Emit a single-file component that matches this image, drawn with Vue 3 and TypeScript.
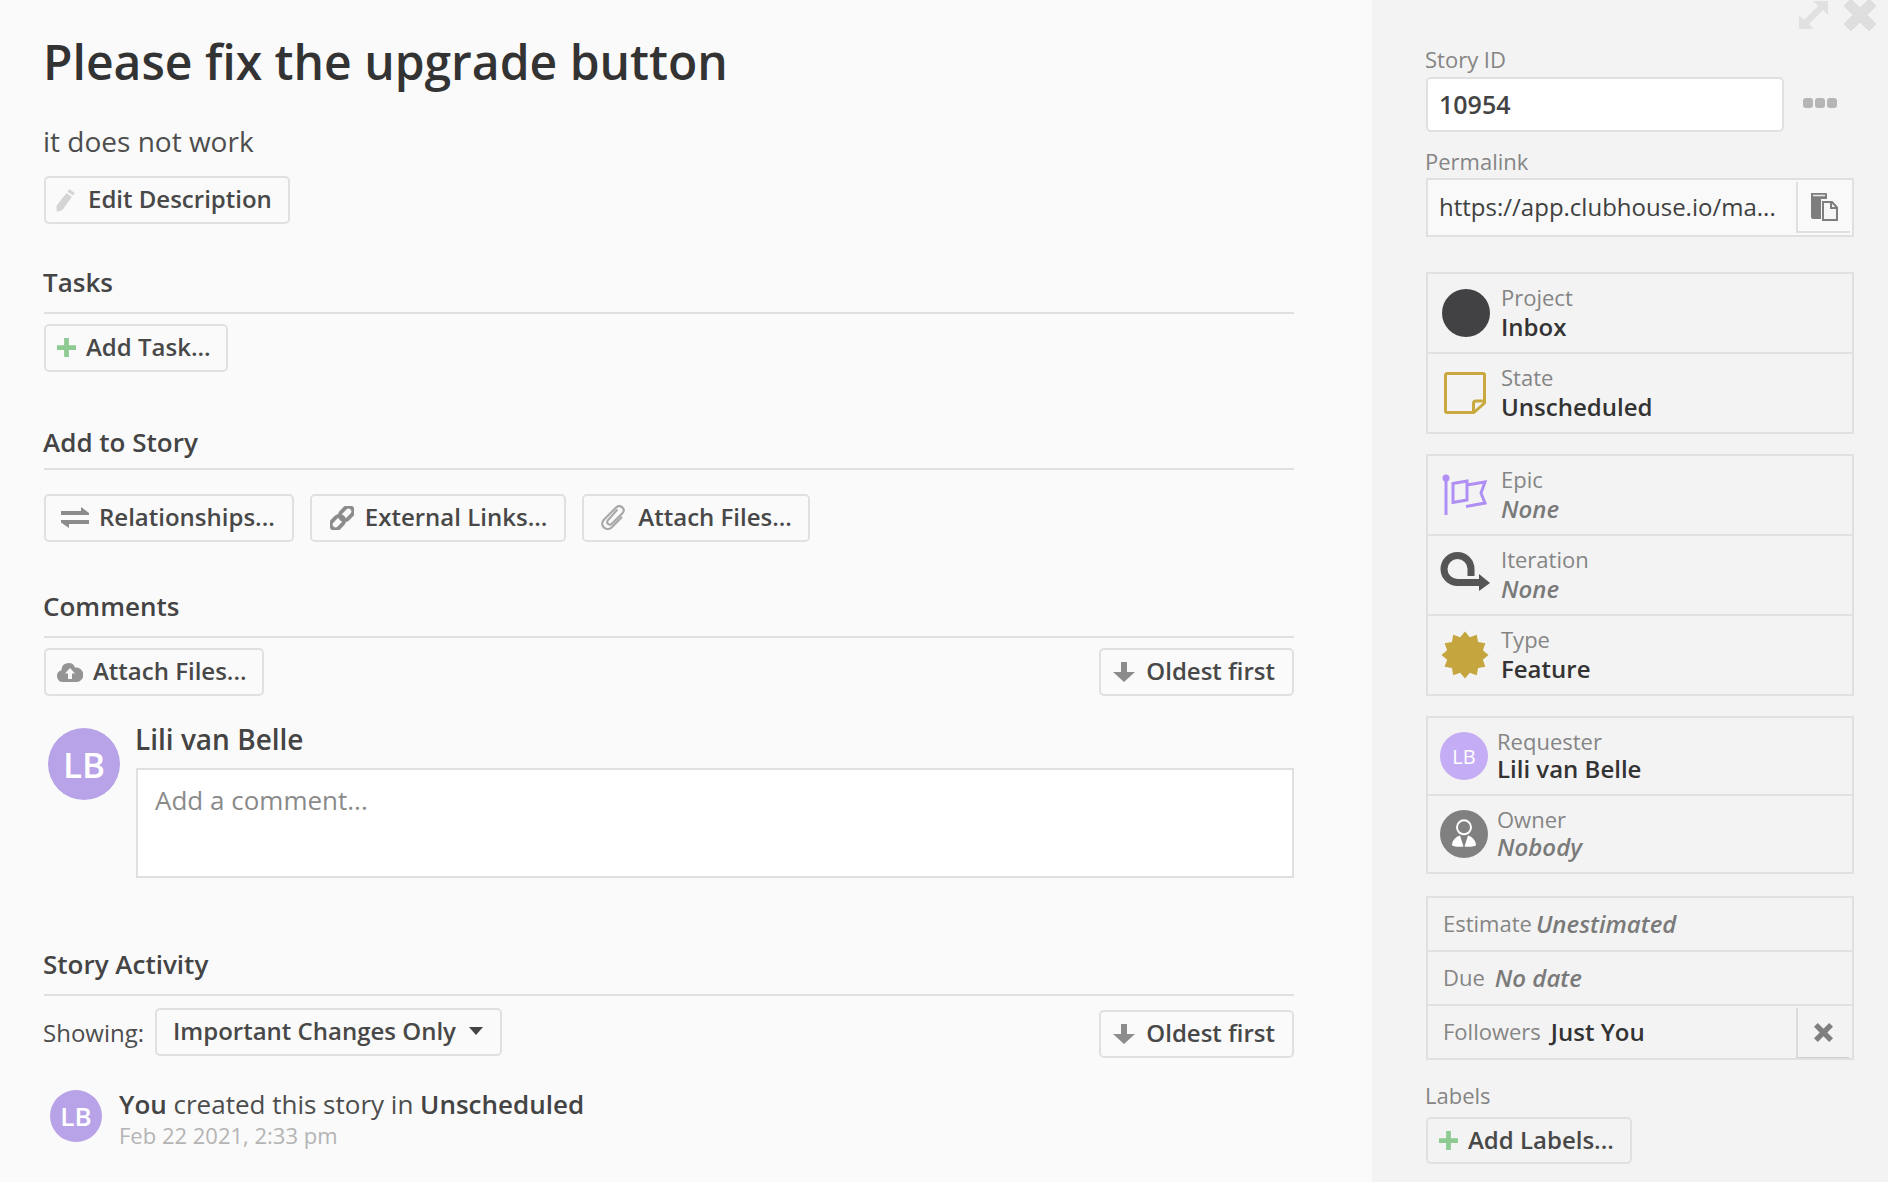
<script setup lang="ts">
const burst: string = Array.from({ length: 24 }, (_, i) => {
  const r = i % 2 === 0 ? 23.5 : 18.5
  const a = (i * Math.PI) / 12 - Math.PI / 2
  return `${(24 + r * Math.cos(a)).toFixed(2)},${(24 + r * Math.sin(a)).toFixed(2)}`
}).join(' ')
</script>

<template>
  <div class="page">
    <main class="main">
      <h1 class="title">Please fix the upgrade button</h1>
      <p class="desc">it does not work</p>
      <button class="btn edit">
        <svg class="ic-pencil" viewBox="2 0 18 22"><path d="M14 1l5 3.500-1.600 2.400-5-3.500zM11.400 4.600l5 3.500-8.800 12.200-5 1.400-.4-5.300z" fill="#d4d4d4"/></svg>
        Edit Description
      </button>

      <section class="tasks">
        <h2 class="heading">Tasks</h2>
        <button class="btn add-task">
          <svg class="ic-plus" viewBox="0 0 20 20"><path d="M7.500 0h5v7.500H20v5h-7.500V20h-5v-7.500H0v-5h7.500z" fill="#8ecb93"/></svg>
          Add Task...
        </button>
      </section>

      <section class="add-story">
        <h2 class="heading story-heading">Add to Story</h2>
        <div class="btn-row">
          <button class="btn rel-btn">
            <svg class="ic-rel" viewBox="0 0 28 21"><path d="M0 4h20V0l8 6v2H0zM28 13H0v2.500L8 21v-4h20z" fill="#8c8c8c"/></svg>
            Relationships...
          </button>
          <button class="btn ext-btn">
            <svg class="ic-link" viewBox="0 0 24 24" fill="none" stroke="#8c8c8c" stroke-width="3.800"><rect x="11.750" y="0" width="9.500" height="15" rx="4.750" transform="rotate(45 16.500 7.500)"/><rect x="2.750" y="9" width="9.500" height="15" rx="4.750" transform="rotate(45 7.500 16.500)"/></svg>
            External Links...
          </button>
          <button class="btn">
            <svg class="ic-clip" viewBox="1 1 22 22" fill="none" stroke="#a8a8a8" stroke-width="1.900" stroke-linecap="round"><path d="M15 5.500L7 14.500c-2 2.500 1.500 5 3.500 3L20 8c3-3.500-2-8-5.500-5L3.500 14c-4.500 5 2.500 11 7 6.500L19 12"/></svg>
            Attach Files...
          </button>
        </div>
      </section>

      <section class="comments">
        <h2 class="heading">Comments</h2>
        <div class="bar">
          <button class="btn cloud-btn">
            <svg class="ic-cloud" viewBox="0 0 26 20"><path d="M6 20a6 6 0 0 1-1.500-11.800A7 7 0 0 1 18 5.500 7.300 7.300 0 0 1 20 20z" fill="#949494"/><path d="M13 6l5 5.500h-3V17h-4v-5.500H8z" fill="#fafafa"/></svg>
            Attach Files...
          </button>
          <button class="btn oldest">
            <svg class="ic-down" viewBox="0 0 22 20"><path d="M8 0h6v10h8L11 20 0 10h8z" fill="#8c8c8c"/></svg>
            Oldest first
          </button>
        </div>
        <div class="composer">
          <div class="avatar big">LB</div>
          <div class="compose-body">
            <div class="author">Lili van Belle</div>
            <div class="textarea">Add a comment...</div>
          </div>
        </div>
      </section>

      <section class="activity">
        <h2 class="heading">Story Activity</h2>
        <div class="bar show-bar">
          <div class="showing">
            <span class="show-label">Showing:</span>
            <button class="btn select">
              Important Changes Only
              <span class="caret"></span>
            </button>
          </div>
          <button class="btn oldest oldest-low">
            <svg class="ic-down" viewBox="0 0 22 20"><path d="M8 0h6v10h8L11 20 0 10h8z" fill="#8c8c8c"/></svg>
            Oldest first
          </button>
        </div>
        <div class="entry">
          <div class="avatar mid">LB</div>
          <div class="entry-text">
            <div class="entry-line"><b>You</b> created this story in <b>Unscheduled</b></div>
            <div class="entry-date">Feb 22 2021, 2:33 pm</div>
          </div>
        </div>
      </section>
    </main>

    <aside class="side">
      <svg class="ic-expand" viewBox="0 0 32 30"><path d="M1 29V15l5 5L20 6l-5-5h15v14l-5-5L11 24l5 5z" fill="#e1e1e1"/></svg>
      <svg class="ic-close" viewBox="0 0 32 32"><path d="M7 -1L16 8l9-9 7 7-9 9 9 9-7 7-9-9-9 9-7-7 9-9-9-9z" fill="#dedede" stroke="#dedede" stroke-linejoin="round" stroke-width="1"/></svg>

      <div class="label">Story ID</div>
      <div class="id-row">
        <div class="id-input">10954</div>
        <div class="dots"><i></i><i></i><i></i></div>
      </div>

      <div class="label perma-label">Permalink</div>
      <div class="perma">
        <div class="perma-url">https://app.clubhouse.io/ma...</div>
        <div class="perma-copy">
          <svg class="ic-copy" viewBox="0 0 28 28"><path d="M1 0h15a1 1 0 0 1 1 1v5h-6v20H3a2 2 0 0 1-2-2z" fill="#7e7e7e"/><path d="M13 9h9l5 5.500V27H13z" fill="#f6f6f6" stroke="#7e7e7e" stroke-width="2"/><path d="M21 9v6h6" fill="none" stroke="#7e7e7e" stroke-width="2"/><path d="M3 2.500h12" stroke="#e8e8e8" stroke-width="1.500"/></svg>
        </div>
      </div>

      <div class="group first">
        <div class="row">
          <span class="ico"><span class="dot"></span></span>
          <div class="meta"><div class="k">Project</div><div class="v">Inbox</div></div>
        </div>
        <div class="row">
          <span class="ico">
            <svg class="ic-note" viewBox="0 0 42 42" fill="none" stroke="#c9a93f" stroke-width="3"><path d="M3 1.500h36a1.500 1.500 0 0 1 1.500 1.500v28L30 40.500H3A1.500 1.500 0 0 1 1.500 39V3A1.500 1.500 0 0 1 3 1.500z" stroke-linejoin="round"/><path d="M40 29H32a2.500 2.500 0 0 0-2.500 2.500V40"/></svg>
          </span>
          <div class="meta"><div class="k">State</div><div class="v">Unscheduled</div></div>
        </div>
      </div>

      <div class="group">
        <div class="row">
          <span class="ico">
            <svg class="ic-flag" viewBox="0 0 50 50" fill="none" stroke="#b08ff5" stroke-width="3"><path d="M7 8v37"/><circle cx="7" cy="8" r="3.500" fill="#b08ff5" stroke="none"/><path d="M14 13.500l14-2.500v19l-14 2.500zM28 15l18-3-4 11 4 10-19 3.500"/></svg>
          </span>
          <div class="meta"><div class="k">Epic</div><div class="v none">None</div></div>
        </div>
        <div class="row">
          <span class="ico">
            <svg class="ic-iter" viewBox="0 0 50 42"><path d="M31 26V19A13.500 13.500 0 1 0 17.500 32.500H40" fill="none" stroke="#555" stroke-width="7"/><path d="M39 24l11 9-11 8z" fill="#555"/></svg>
          </span>
          <div class="meta"><div class="k">Iteration</div><div class="v none">None</div></div>
        </div>
        <div class="row">
          <span class="ico">
            <svg class="ic-burst" viewBox="0 0 48 48"><polygon :points="burst" fill="#c4a53e"/></svg>
          </span>
          <div class="meta"><div class="k">Type</div><div class="v">Feature</div></div>
        </div>
      </div>

      <div class="group people">
        <div class="row person">
          <span class="person-ico"><span class="avatar small">LB</span></span>
          <div class="meta"><div class="k">Requester</div><div class="v">Lili van Belle</div></div>
        </div>
        <div class="row person">
          <span class="person-ico">
            <svg class="ic-owner" viewBox="0 0 48 48"><circle cx="24" cy="24" r="24" fill="#808080"/><circle cx="24" cy="17.300" r="7" fill="none" stroke="#fff" stroke-width="2"/><path d="M20 25.500C15 27 12 31 12 35.500c3 1.500 8 1.500 11.500 1zM28 25.500C33 27 36 31 36 35.500c-3 1.500-8 1.500-11.500 1z" fill="#fff"/></svg>
          </span>
          <div class="meta"><div class="k">Owner</div><div class="v none">Nobody</div></div>
        </div>
      </div>

      <div class="group compact">
        <div class="line"><span class="k">Estimate</span><span class="v none est">Unestimated</span></div>
        <div class="line"><span class="k">Due</span><span class="v none due">No date</span></div>
        <div class="line follow">
          <div class="follow-main"><span class="k">Followers</span><span class="v fol">Just You</span></div>
          <div class="follow-x">
            <svg class="ic-x" viewBox="0 0 20 20"><path d="M4 0l6 6 6-6 4 4-6 6 6 6-4 4-6-6-6 6-4-4 6-6-6-6z" fill="#7f7f7f"/></svg>
          </div>
        </div>
      </div>

      <div class="label labels-label">Labels</div>
      <button class="btn add-labels">
        <svg class="ic-plus" viewBox="0 0 20 20"><path d="M7.500 0h5v7.500H20v5h-7.500V20h-5v-7.500H0v-5h7.500z" fill="#8ecb93"/></svg>
        Add Labels...
      </button>
    </aside>
  </div>
</template>

<style>
html, body { margin: 0; padding: 0; background: #fafafa; }
</style>

<style scoped>
.page {
  display: flex;
  width: 1888px;
  height: 1182px;
  overflow: hidden;
  font-family: "Open Sans", "Liberation Sans", sans-serif;
  color: #3a3a3a;
  background: #fafafa;
}
.main { width: 1372px; box-sizing: border-box; padding: 0 78px 0 44px; flex: none; }
.title { margin: 0 0 0 -1px; padding-top: 31px; font-size: 48px; line-height: 62px; font-weight: 600; color: #333; }
.desc { margin: 30px 0 0 -1px; font-size: 28px; line-height: 36px; font-weight: 400; color: #4d4d4d; }
.btn {
  display: inline-flex;
  align-items: center;
  height: 48px;
  box-sizing: border-box;
  padding: 0 16px 3px 12px;
  border: 2px solid #e0e0e0;
  border-radius: 5px;
  background: transparent;
  font-family: inherit;
  font-size: 24px;
  font-weight: 600;
  color: #484848;
  white-space: nowrap;
}
.btn svg { position: relative; top: 1px; }
.edit { margin-top: 17px; padding-right: 16px; }
.heading {
  margin: 0;
  height: 48px;
  line-height: 32px;
  font-size: 26px;
  font-weight: 600;
  color: #444;
  border-bottom: 2px solid #e0e0e0;
  box-sizing: border-box;
  text-indent: -1px;
}
.story-heading { line-height: 40px; }
.tasks { margin-top: 42px; }
.add-task { margin-top: 10px; padding-right: 15px; }
.add-story { margin-top: 50px; }
.btn-row { display: flex; gap: 16px; margin-top: 24px; }
.rel-btn { padding-right: 17px; }
.ext-btn { padding-right: 17px; }
.cloud-btn { padding-right: 15px; }
.oldest { padding-right: 17px; }
.comments { margin-top: 48px; }
.bar { display: flex; justify-content: space-between; align-items: flex-start; margin-top: 10px; }
.composer { display: flex; margin-top: 32px; padding-left: 4px; }
.avatar {
  display: flex; align-items: center; justify-content: center;
  border-radius: 50%;
  background: #b9a3e8;
  color: #fff;
  flex: none;
}
.big { width: 72px; height: 72px; font-size: 35px; font-weight: 600; }
.mid { width: 52px; height: 52px; font-size: 26px; font-weight: 600; }
.small { width: 48px; height: 48px; font-size: 20px; background: #c5adf5; font-weight: 400; }
.compose-body { flex: 1; margin-left: 16px; }
.author { font-size: 28px; line-height: 40px; height: 40px; font-weight: 600; margin: -9px 0 0 -1px; color: #444; }
.textarea {
  margin-top: 9px;
  height: 110px;
  box-sizing: border-box;
  padding: 12px 17px;
  background: #fff;
  border: 2px solid #e0e0e0;
  font-size: 26px;
  line-height: 36px;
  color: #8a8a8a;
}
.activity { margin-top: 70px; }
.show-bar { margin-top: 12px; }
.showing { display: flex; align-items: center; gap: 11px; }
.show-label { font-size: 24px; color: #4d4d4d; margin-left: -1px; }
.select { padding: 0 17px 3px 16px; }
.caret {
  margin-left: 13px;
  border-left: 7px solid transparent;
  border-right: 7px solid transparent;
  border-top: 8px solid #444;
}
.oldest-low { margin-top: 2px; }
.entry { display: flex; padding-left: 6px; margin-top: 32px; }
.entry-text { margin-left: 17px; margin-top: -4px; }
.entry-line { font-size: 26px; line-height: 36px; color: #4d4d4d; }
.entry-line b { font-weight: 600; color: #444; }
.entry-date { font-size: 22px; line-height: 30px; color: #b4b4b4; margin-top: -2px; }

.ic-pencil { width: 20px; height: 24px; margin-right: 12px; margin-left: -2px; }
.ic-plus { width: 19px; height: 19px; margin-right: 10px; margin-left: -1px; }
.ic-rel { width: 28px; height: 21px; margin-right: 10px; margin-left: 3px; }
.ic-link { width: 24px; height: 24px; margin-right: 11px; margin-left: 6px; }
.ic-clip { width: 25px; height: 25px; margin-right: 12px; margin-left: 5px; }
.ic-cloud { width: 26px; height: 20px; margin-right: 10px; margin-left: -1px; }
.ic-down { width: 22px; height: 20px; margin-right: 11px; }

.side {
  position: relative;
  flex: 1;
  box-sizing: border-box;
  background: #f3f3f3;
  padding: 44px 34px 0 54px;
}
.ic-expand { position: absolute; left: 426px; top: 0; width: 32px; height: 30px; }
.ic-close { position: absolute; left: 472px; top: 0; width: 32px; height: 32px; }
.label { font-size: 22px; line-height: 30px; color: #858585; margin-left: -1px; }
.id-row { display: flex; align-items: center; margin-top: 3px; }
.id-input {
  width: 358px; height: 55px; box-sizing: border-box;
  background: #fff;
  border: 2px solid #e0e0e0;
  border-radius: 5px;
  padding-left: 11px;
  line-height: 51px;
  font-size: 25px;
  font-weight: 600;
  color: #444;
}
.dots { display: flex; gap: 2px; margin: 0 0 3px 19px; }
.dots i { width: 10px; height: 10px; border-radius: 3px; background: #b5b5b5; }
.perma-label { margin-top: 14px; }
.perma {
  display: flex; align-items: stretch;
  margin-top: 2px;
  height: 59px; box-sizing: border-box;
  border: 2px solid #e0e0e0;
  background: #f9f9f9;
}
.perma-url { flex: 1; padding-left: 11px; line-height: 53px; font-size: 24px; color: #3f3f3f; white-space: nowrap; overflow: hidden; }
.perma-copy {
  width: 54px; box-sizing: border-box; margin: 2px 2px 2px 0;
  border-left: 2px solid #e0e0e0; border-bottom: 2px solid #e0e0e0;
  display: flex; align-items: center; justify-content: center;
}
.ic-copy { width: 28px; height: 28px; }
.group { border: 2px solid #e0e0e0; margin-top: 20px; }
.group.first { margin-top: 35px; }
.row { display: flex; height: 78px; align-items: center; box-sizing: content-box; }
.row + .row { border-top: 2px solid #e0e0e0; }
.ico { width: 73px; display: flex; justify-content: center; flex: none; box-sizing: border-box; }
.dot { width: 48px; height: 48px; border-radius: 50%; background: #424244; margin-left: 2px; }
.meta { display: flex; flex-direction: column; padding-bottom: 3px; }
.k { font-size: 22px; line-height: 30px; color: #858585; }
.v { font-size: 24px; line-height: 29px; font-weight: 600; color: #333; }
.v.none { font-style: italic; font-weight: 600; color: #7a7a7a; font-size: 24px; }
.ic-note { width: 42px; height: 42px; }
.ic-flag { width: 50px; height: 50px; margin-right: 2px; }
.ic-iter { width: 50px; height: 42px; margin-bottom: 9px; }
.ic-burst { width: 48px; height: 48px; }
.people .row { height: 76px; }
.person-ico { width: 69px; padding-left: 12px; box-sizing: border-box; flex: none; display: flex; }
.ic-owner { width: 48px; height: 48px; display: block; }
.people .k { line-height: 28px; }
.people .v { line-height: 27px; }
.compact { margin-top: 22px; }
.line { height: 50px; padding-bottom: 2px; display: flex; align-items: center; padding-left: 15px; box-sizing: content-box; }
.line + .line { border-top: 2px solid #e0e0e0; }
.line .k { line-height: 50px; }
.est { margin-left: 4px; }
.due { margin-left: 10px; }
.fol { margin-left: 10px; }
.follow { padding: 0; height: 52px; }
.follow-main { flex: 1; padding: 0 0 2px 15px; display: flex; align-items: center; height: 50px; }
.follow-x {
  width: 53px; height: 50px;
  box-sizing: border-box;
  margin: 2px 3px 0 0;
  border-left: 2px solid #dcdcdc;
  border-bottom: 1px solid #cfcfcf;
  display: flex; align-items: center; justify-content: center;
}
.ic-x { width: 19px; height: 19px; }
.labels-label { margin-top: 20px; }
.add-labels { margin-top: 7px; padding: 0 16px 3px 12px; height: 47px; }
</style>
